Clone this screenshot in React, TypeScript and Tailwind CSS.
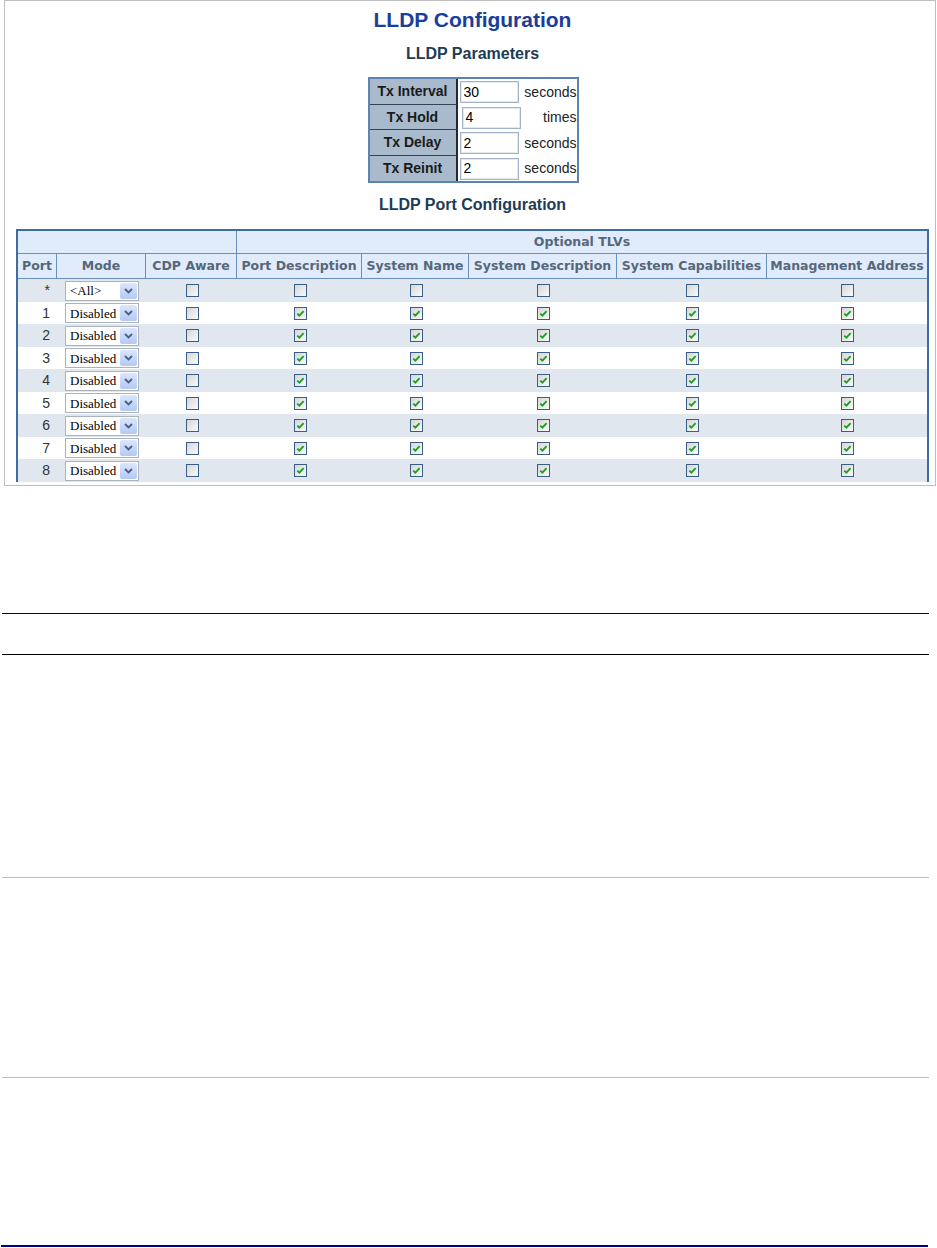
import type { ReactNode } from 'react';

// LLDP port table column widths (inner, between the 2px outer borders)
const COLS = 'grid grid-cols-[39px_89px_91px_125px_107px_148px_150px_160px]';

const PARAMS = [
  { label: 'Tx Interval', value: '30', unit: 'seconds', h: 'h-[26px]' },
  { label: 'Tx Hold', value: '4', unit: 'times', h: 'h-[25px]' },
  { label: 'Tx Delay', value: '2', unit: 'seconds', h: 'h-[26px]' },
  { label: 'Tx Reinit', value: '2', unit: 'seconds', h: 'h-[25px]' },
];

const TLVS = [
  'Port Description',
  'System Name',
  'System Description',
  'System Capabilities',
  'Management Address',
];

const PORTS = ['*', '1', '2', '3', '4', '5', '6', '7', '8'];

export default function App() {
  return (
    <div className="h-[1248px] w-[937px] bg-white font-['Liberation_Sans',Arial,sans-serif]">
      <Frame />

      <div className="ml-[2px] mt-[127px] h-[1px] w-[927px] bg-[#00005e]" />
      <div className="ml-[2px] mt-[40px] h-[1px] w-[927px] bg-black" />
      <div className="ml-[2px] mt-[222px] h-[1px] w-[927px] bg-[#bdbdbd]" />
      <div className="ml-[2px] mt-[199px] h-[1px] w-[927px] bg-[#bdbdbd]" />
      <div className="ml-[1px] mt-[167px] h-[2px] w-[927px] bg-[#000080]" />
    </div>
  );
}

function Frame() {
  return (
    <div className="ml-[4px] h-[486px] w-[932px] overflow-hidden border border-[#bdbdbd]">
      <div className="ml-[11px] flex w-[913px] flex-col items-center">
        <h1 className="mt-[7px] text-[21px] font-bold leading-[24px] text-[#1a3e9c]">
          LLDP Configuration
        </h1>
        <h2 className="mt-[12px] text-[16px] font-bold leading-[20px] text-[#203c55]">
          LLDP Parameters
        </h2>
        <ParamsTable />
        <h2 className="mt-[12px] text-[16px] font-bold leading-[20px] text-[#203c55]">
          LLDP Port Configuration
        </h2>
        <PortTable />
      </div>
    </div>
  );
}

function ParamsTable() {
  return (
    <div className="mt-[13px] ml-[1px] w-[211px] border-2 border-[#5b84b1] bg-white">
      {PARAMS.map((p, i) => (
        <div key={p.label} className={`flex ${p.h}`}>
          <div
            className={`flex w-[88px] items-center justify-center border-r-2 border-r-[#1f2a35] bg-[#a8bacb] text-[14px] font-bold text-[#1a1a1a] ${
              i < PARAMS.length - 1 ? 'border-b border-b-[#34434f]' : ''
            }`}
          >
            {p.label}
          </div>
          <div className="flex flex-1 items-center pl-[2px]">
            <div
              className={`flex h-[22px] w-[59px] items-center border border-[#a3b3c7] pl-[3px] text-[14px] text-black shadow-[inset_0_0_0_1px_#e3e9f1] ${
                i === 1 ? 'ml-[2px]' : ''
              }`}
            >
              {p.value}
            </div>
            <span className="flex-1 text-right text-[14px] text-[#222]">{p.unit}</span>
          </div>
        </div>
      ))}
    </div>
  );
}

function HeadCell({ children, className = '' }: { children?: ReactNode; className?: string }) {
  return (
    <div
      className={`flex items-center justify-center whitespace-nowrap font-['DejaVu_Sans',Verdana,sans-serif] text-[12.5px] font-bold text-[#56677a] ${className}`}
    >
      {children}
    </div>
  );
}

function PortTable() {
  return (
    <div className="mt-[14px] w-[913px] border-x-2 border-t-2 border-[#3f6d9f]">
      {/* header row 1 */}
      <div className="flex h-[23px] bg-[#e0ecfb]">
        <HeadCell className="w-[219px] border-b border-r border-[#6990bd]" />
        <HeadCell className="flex-1 border-b border-[#6990bd]">Optional TLVs</HeadCell>
      </div>
      {/* header row 2 */}
      <div className={`${COLS} h-[25px] bg-[#e0ecfb]`}>
        {['Port', 'Mode', 'CDP Aware', ...TLVS].map((h, i) => (
          <HeadCell
            key={h}
            className={`border-b border-[#6990bd] ${i < 7 ? 'border-r' : ''}`}
          >
            {h}
          </HeadCell>
        ))}
      </div>
      {PORTS.map((port, i) => (
        <div
          key={port}
          className={`${COLS} ${i % 2 === 0 ? 'h-[23px] bg-[#e0e7ef]' : 'h-[22px] bg-white'}`}
        >
          <div className="flex items-center justify-end pr-[7px] text-[14px] text-[#333]">
            {port}
          </div>
          <div className="flex items-center justify-center pl-[1px]">
            <FakeSelect value={port === '*' ? '<All>' : 'Disabled'} />
          </div>
          <div className="flex items-center justify-center pl-[1px]">
            <Checkbox checked={false} />
          </div>
          {TLVS.map((t) => (
            <div key={t} className="flex items-center justify-center pl-[1px]">
              <Checkbox checked={port !== '*'} />
            </div>
          ))}
        </div>
      ))}
    </div>
  );
}

function FakeSelect({ value }: { value: string }) {
  return (
    <div className="flex h-[20px] w-[74px] items-center border border-[#a9b2bd] bg-white">
      <span className="flex-1 pl-[4px] font-['Liberation_Serif','Times_New_Roman',serif] text-[13px] leading-none text-black">
        {value}
      </span>
      <div className="mr-[1px] flex h-[16px] w-[17px] items-center justify-center rounded-[2px] bg-linear-to-b from-[#dbe6fc] to-[#b4c9f3]">
        <svg width="9" height="6" viewBox="0 0 9 6">
          <path d="M1 1 L4.5 4.5 L8 1" fill="none" stroke="#4a5f86" strokeWidth="1.8" />
        </svg>
      </div>
    </div>
  );
}

function Checkbox({ checked }: { checked: boolean }) {
  return (
    <div className="flex h-[13px] w-[13px] items-center justify-center border border-[#3a5e86] bg-linear-to-br from-[#d6d6d6] to-[#fbfbfb]">
      {checked && (
        <svg width="11" height="11" viewBox="0 0 11 11">
          <path d="M2.3 5.6 L4.4 7.7 L8.6 3.2" fill="none" stroke="#1f9f22" strokeWidth="1.9" />
        </svg>
      )}
    </div>
  );
}
